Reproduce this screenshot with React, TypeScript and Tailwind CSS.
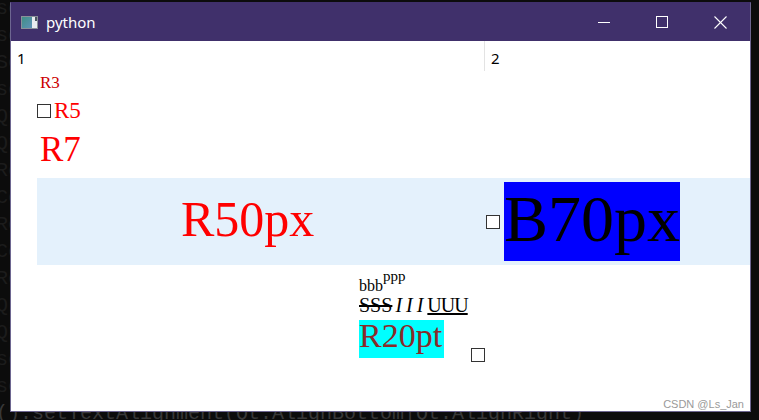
import React from 'react';

// only the bits of the editor that peek out beside the window
const edgeBits = ['se', 'se', 'Se', 'se', 'Qt', 'Qt', 'Ro', 'Co', 'Ro', 'Co', 'Ro', 'QL', 'Qt', 'se', 'se'];

const Check = ({ className = '' }: { className?: string }) => (
  <span className={`block h-[14px] w-[14px] shrink-0 border border-[#333333] bg-white ${className}`} />
);

const TitleIcon = () => (
  <svg width="17" height="13" viewBox="0 0 17 13">
    <defs>
      <linearGradient id="g" x1="0" y1="0" x2="1" y2="1">
        <stop offset="0" stopColor="#3f8f86" />
        <stop offset="1" stopColor="#5f93b8" />
      </linearGradient>
    </defs>
    <rect x="0.5" y="0.5" width="16" height="12" fill="#e8ecef" stroke="#8a9199" />
    <rect x="1" y="1" width="10" height="11" fill="url(#g)" />
    <rect x="14" y="1" width="2" height="4" fill="#4b5560" />
  </svg>
);

export default function App() {
  return (
    <div className="relative h-[420px] w-[759px] overflow-hidden bg-[#0c0c0c]">
      {/* editor text behind the window */}
      <div className="absolute left-[-4px] top-[-5px] flex flex-col whitespace-pre font-['Liberation_Mono',monospace] text-[20px] leading-[27px] text-[#1c1c1c]">
        {edgeBits.map((l, i) => (
          <div key={i}>{l}</div>
        ))}
        <div className="text-[#383838]">().setTextAlignment(Qt.AlignBottom|Qt.AlignRight)</div>
      </div>

      {/* app window */}
      <div className="absolute left-[10px] top-[2px] flex h-[410px] w-[741px] flex-col border border-[#6d6690] border-t-[#40306b] font-['Noto_Sans',sans-serif]">
        <div className="flex h-[38px] shrink-0 items-center bg-[#40306b] text-white">
          <div className="ml-[10px] mt-[1px] flex items-center">
            <TitleIcon />
          </div>
          <span className="ml-[8px] text-[15px] leading-none">python</span>
          <div className="ml-auto mr-[1px] flex h-full">
            <div className="flex w-[58px] items-center justify-center">
              <span className="mt-[1px] block h-[1px] w-[12px] bg-white" />
            </div>
            <div className="flex w-[58px] items-center justify-center">
              <span className="block h-[12px] w-[12px] border border-white" />
            </div>
            <div className="flex w-[58px] items-center justify-center">
              <svg width="13" height="13" viewBox="0 0 13 13" stroke="white" strokeWidth="1.1">
                <line x1="0.5" y1="0.5" x2="12.5" y2="12.5" />
                <line x1="12.5" y1="0.5" x2="0.5" y2="12.5" />
              </svg>
            </div>
          </div>
        </div>

        <div className="flex flex-1 flex-col bg-white">
          {/* header */}
          <div className="flex h-[30px] shrink-0 text-[15px] leading-none text-black">
            <div className="w-[474px] border-r border-[#e3e3e3] pl-[6px] pt-[10px]">1</div>
            <div className="pl-[6px] pt-[10px]">2</div>
          </div>

          <div className="flex flex-col pl-[26px] font-['Liberation_Serif',serif] leading-none">
            <div className="mt-[3px] pl-[3px] text-[17px] text-[#cc0000]">R3</div>

            <div className="mt-[8px] flex items-center gap-[3px]">
              <Check />
              <span className="text-[23px] text-[#ff0000]">R5</span>
            </div>

            <div className="mt-[10px] pl-[3px] text-[35px] text-[#ff0000]">R7</div>

            <div className="mt-[11px] flex h-[87px] items-center bg-[#e4f1fc]">
              <div className="w-[449px] pb-[5px] pl-[144px] text-[50px] text-[#ff0000]">R50px</div>
              <Check />
              <div className="ml-[4px] h-[79px] bg-[#0000ff] text-[66px] leading-[73px] text-black">B70px</div>
            </div>

            <div className="ml-[322px] flex flex-col text-black">
              <div className="mt-[13px] text-[16px]">
                bbb<span className="relative -top-[10px] text-[15px]">ppp</span>
              </div>
              <div className="mt-[1px] flex text-[20px]">
                <span className="line-through">SSS</span>
                <span className="ml-[3px] italic tracking-[4px]">III</span>
                <span className="underline tracking-[-1px]">UUU</span>
              </div>
              <div className="mt-[5px] flex items-start">
                <div className="h-[38px] bg-[#00ffff] pr-[2px] text-[34px] leading-[32px] text-[#8a2a2a]">R20pt</div>
                <Check className="ml-[27px] mt-[28px]" />
              </div>
            </div>
          </div>
        </div>
      </div>

      <div className="absolute right-[15px] top-[399px] font-['Liberation_Sans',sans-serif] text-[11px] leading-none text-[#9a9a9a]">
        CSDN @Ls_Jan
      </div>
    </div>
  );
}
